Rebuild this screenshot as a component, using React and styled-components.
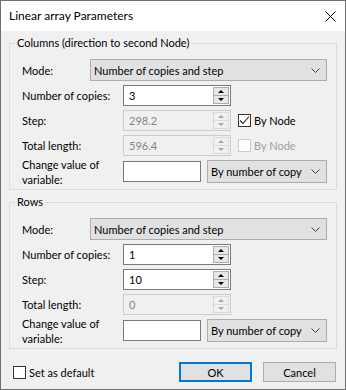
import React from "react";
import styled, { createGlobalStyle } from "styled-components";

const GlobalStyle = createGlobalStyle`
  html, body {
    margin: 0;
    padding: 0;
    background: #ffffff;
  }
  body {
    font-family: Lato, "Liberation Sans", sans-serif;
    font-size: 11px;
    color: #000;
  }
`;

const Window = styled.div`
  width: 346px;
  height: 390px;
  box-sizing: border-box;
  border: 1px solid #707070;
  background: #f0f0f0;
  display: flex;
  flex-direction: column;
`;

const TitleBar = styled.div`
  height: 30px;
  flex-shrink: 0;
  background: #ffffff;
  display: flex;
  align-items: center;
  justify-content: space-between;
  padding: 0 9px 0 8px;
`;

const Title = styled.span`
  font-size: 12px;
  line-height: 16px;
`;

const Body = styled.div`
  flex: 1;
  padding: 4px 8px 0;
  display: flex;
  flex-direction: column;
`;

const Group = styled.fieldset`
  margin: ${(p) => (p.first ? "0" : "4px 0 0")};
  border: 1px solid #dcdcdc;
  padding: 8px 9px 6px 12px;
  min-width: 0;
`;

const Legend = styled.legend`
  padding: 0 2px;
  margin-left: -7px;
  line-height: 16px;
  font-size: 11px;
`;

const Rows = styled.div`
  display: flex;
  flex-direction: column;
  gap: 4px;
`;

const Row = styled.div`
  display: flex;
  align-items: center;
  height: ${(p) => p.h}px;
`;

const Label = styled.div`
  width: ${(p) => p.w}px;
  flex-shrink: 0;
  font-size: 11px;
  line-height: 15px;
  color: ${(p) => (p.disabled ? "#a0a0a0" : "#000")};
`;

const Combo = styled.div`
  width: ${(p) => p.w}px;
  height: ${(p) => p.h}px;
  box-sizing: border-box;
  border: 1px solid #adadad;
  background: #e1e1e1;
  display: flex;
  align-items: center;
  justify-content: space-between;
  padding: 0 6px 0 3px;
  margin-left: ${(p) => p.ml || 0}px;
  font-size: 11px;
  white-space: nowrap;
`;

const Spin = styled.div`
  width: 108px;
  height: 21px;
  box-sizing: border-box;
  border: 1px solid ${(p) => (p.disabled ? "#cccccc" : "#7a7a7a")};
  background: ${(p) => (p.disabled ? "#f0f0f0" : "#ffffff")};
  display: flex;
  flex-shrink: 0;
`;

const SpinValue = styled.div`
  flex: 1;
  padding-left: 5px;
  display: flex;
  align-items: center;
  font-size: 11px;
  color: ${(p) => (p.disabled ? "#838383" : "#000")};
`;

const SpinButtons = styled.div`
  width: 16px;
  margin: 1px;
  display: flex;
  flex-direction: column;
`;

const SpinHalf = styled.div`
  flex: 1;
  box-sizing: border-box;
  border: 1px solid ${(p) => (p.disabled ? "#d9d9d9" : "#adadad")};
  border-top: ${(p) => (p.down ? "none" : undefined)};
  background: ${(p) => (p.disabled ? "#f0f0f0" : "#e8e8e8")};
  display: flex;
  align-items: center;
  justify-content: center;
`;

const Arrow = styled.div`
  width: 0;
  height: 0;
  border-left: 3px solid transparent;
  border-right: 3px solid transparent;
  ${(p) => (p.down ? "border-top" : "border-bottom")}: 3px solid
    ${(p) => (p.disabled ? "#a8a8a8" : "#000")};
`;

const TextBox = styled.div`
  width: 78px;
  height: 21px;
  box-sizing: border-box;
  border: 1px solid #7a7a7a;
  background: #ffffff;
  flex-shrink: 0;
`;

const CheckLabel = styled.label`
  display: flex;
  align-items: center;
  gap: 3px;
  font-size: 11px;
  margin-left: ${(p) => p.ml || 0}px;
  color: ${(p) => (p.disabled ? "#a0a0a0" : "#000")};
`;

const Box = styled.span`
  width: 13px;
  height: 13px;
  box-sizing: border-box;
  border: 1px solid ${(p) => (p.disabled ? "#cccccc" : "#333333")};
  background: #ffffff;
  display: flex;
  align-items: center;
  justify-content: center;
`;

const Footer = styled.div`
  display: flex;
  align-items: center;
  margin-top: 13px;
  padding: 0 1px 0 4px;
`;

const Buttons = styled.div`
  margin-left: auto;
  display: flex;
  gap: 11px;
`;

const Button = styled.div`
  width: 73px;
  height: 20px;
  box-sizing: border-box;
  border: ${(p) => (p.primary ? "2px solid #0078d7" : "1px solid #adadad")};
  background: #e1e1e1;
  display: flex;
  align-items: center;
  justify-content: center;
  font-size: 11px;
`;

const Chevron = () => (
  <svg width="9" height="5" viewBox="0 0 9 5">
    <polyline points="0.5,0.5 4.5,4.5 8.5,0.5" fill="none" stroke="#404040" strokeWidth="1" />
  </svg>
);

const CloseIcon = () => (
  <svg width="11" height="11" viewBox="0 0 11 11">
    <path d="M0.5 0.5 L10.5 10.5 M10.5 0.5 L0.5 10.5" stroke="#000" strokeWidth="1" />
  </svg>
);

const SpinBox = ({ value, disabled }) => (
  <Spin disabled={disabled}>
    <SpinValue disabled={disabled}>{value}</SpinValue>
    <SpinButtons>
      <SpinHalf disabled={disabled}>
        <Arrow disabled={disabled} />
      </SpinHalf>
      <SpinHalf disabled={disabled} down>
        <Arrow disabled={disabled} down />
      </SpinHalf>
    </SpinButtons>
  </Spin>
);

const Check = ({ checked, disabled, children, ml }) => (
  <CheckLabel disabled={disabled} ml={ml}>
    <Box disabled={disabled}>
      {checked && (
        <svg width="11" height="11" viewBox="0 0 11 11">
          <polyline points="1,5.5 4,8.5 10,1.5" fill="none" stroke="#222" strokeWidth="1.1" />
        </svg>
      )}
    </Box>
    {children}
  </CheckLabel>
);

const ArrayGroup = ({ title, first, copies, step, total, stepDisabled, byNode }) => (
  <Group first={first}>
    <Legend>{title}</Legend>
    <Rows>
      <Row h={22}>
        <Label w={68}>Mode:</Label>
        <Combo w={237} h={22}>
          Number of copies and step
          <Chevron />
        </Combo>
      </Row>
      <Row h={21}>
        <Label w={101}>Number of copies:</Label>
        <SpinBox value={copies} />
      </Row>
      <Row h={21}>
        <Label w={101}>Step:</Label>
        <SpinBox value={step} disabled={stepDisabled} />
        {byNode && (
          <Check checked ml={7}>
            By Node
          </Check>
        )}
      </Row>
      <Row h={21}>
        <Label w={101}>Total length:</Label>
        <SpinBox value={total} disabled />
        {byNode && (
          <Check disabled ml={7}>
            By Node
          </Check>
        )}
      </Row>
      <Row h={23}>
        <Label w={101}>
          Change value of
          <br />
          variable:
        </Label>
        <TextBox />
        <Combo w={120} h={23} ml={6}>
          By number of copy
          <Chevron />
        </Combo>
      </Row>
    </Rows>
  </Group>
);

export default function App() {
  return (
    <>
      <GlobalStyle />
      <Window>
        <TitleBar>
          <Title>Linear array Parameters</Title>
          <CloseIcon />
        </TitleBar>
        <Body>
          <ArrayGroup
            first
            title="Columns (direction to second Node)"
            copies="3"
            step="298.2"
            total="596.4"
            stepDisabled
            byNode
          />
          <ArrayGroup title="Rows" copies="1" step="10" total="0" />
          <Footer>
            <Check>Set as default</Check>
            <Buttons>
              <Button primary>OK</Button>
              <Button>Cancel</Button>
            </Buttons>
          </Footer>
        </Body>
      </Window>
    </>
  );
}
